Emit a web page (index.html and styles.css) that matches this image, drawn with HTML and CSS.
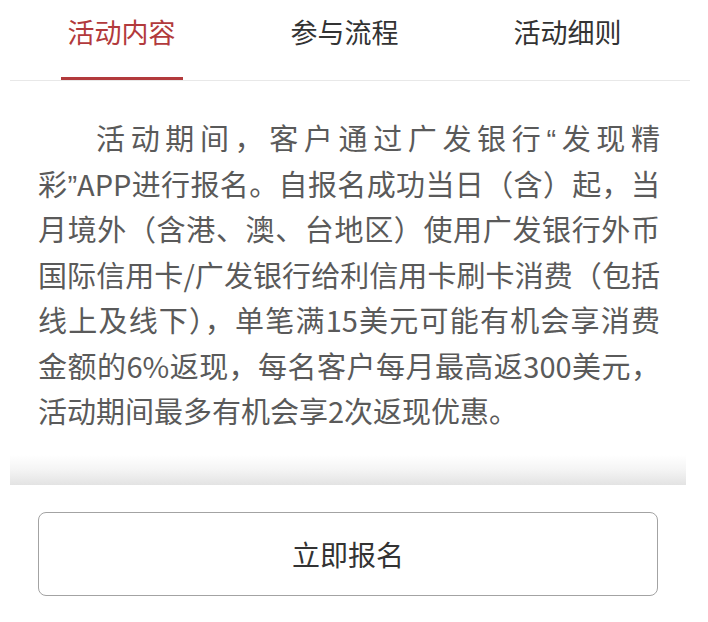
FILE: index.html
```html
<!DOCTYPE html>
<html lang="zh-CN">
<head>
<meta charset="utf-8">
<link rel="stylesheet" href="styles.css">
</head>
<body>
<div class="page">
  <nav class="tabs">
    <div class="tab active"><span class="label">活动内容</span><span class="bar"></span></div>
    <div class="tab"><span class="label">参与流程</span></div>
    <div class="tab"><span class="label">活动细则</span></div>
  </nav>
  <p class="content"><span class="ln first">活动期间，客户通过广发银行<span class="q">“</span>发现精</span><span class="ln">彩<span class="q">”</span>APP进行报名。自报名成功当日（含）起，当</span><span class="ln">月境外（含港、澳、台地区）使用广发银行外币</span><span class="ln">国际信用卡/广发银行给利信用卡刷卡消费（包括</span><span class="ln">线上及线下），单笔满15美元可能有机会享消费</span><span class="ln">金额的6%返现，每名客户每月最高返300美元，</span><span class="ln last">活动期间最多有机会享2次返现优惠。</span></p>
  <div class="band"></div>
  <button class="signup">立即报名</button>
</div>
</body>
</html>
```
FILE: styles.css
```css
html, body {
  margin: 0;
  padding: 0;
  background: #fff;
}
body {
  font-family: "Noto Sans CJK SC", "Noto Sans", sans-serif;
  width: 708px;
  height: 622px;
  overflow: hidden;
}
.page {
  display: flex;
  flex-direction: column;
}
.tabs {
  display: flex;
  margin: 0 18px 0 10px;
  height: 80px;
  border-bottom: 1px solid #e8e8e8;
}
.tab {
  flex: 0 0 223px;
  display: flex;
  flex-direction: column;
  align-items: center;
  height: 80px;
}
.label {
  margin-top: 12px;
  font-size: 27px;
  line-height: 40px;
  color: #333;
}
.tab.active .label {
  color: #b23a3c;
}
.bar {
  margin-top: auto;
  width: 122px;
  height: 3px;
  background: #b23a3c;
}
.content {
  margin: 34px 48px 0 38px;
  font-size: 29px;
  line-height: 45.5px;
  color: #5a5a5a;
}
.ln {
  display: block;
  height: 45.5px;
  white-space: nowrap;
  text-align: justify;
  text-align-last: justify;
}
.ln.first {
  padding-left: 2em;
}
.ln.last {
  text-align: left;
  text-align-last: left;
}
.q {
  font-family: "Liberation Sans", sans-serif;
  line-height: 1;
}
.band {
  margin: 21px 22px 0 10px;
  height: 30px;
  background: linear-gradient(to bottom, #ffffff 0%, #f4f4f4 50%, #e3e3e3 100%);
}
.signup {
  margin: 27px 0 0 38px;
  width: 620px;
  height: 84px;
  border: 1.5px solid #a3a3a3;
  border-radius: 8px;
  background: #fff;
  font-family: "Noto Sans CJK SC", "Noto Sans", sans-serif;
  font-size: 28px;
  color: #333;
  padding: 0;
}
```
